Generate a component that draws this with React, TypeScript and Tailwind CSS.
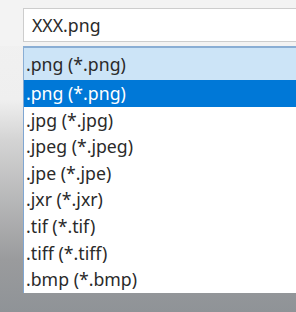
import React from "react";

const items = [
  ".png (*.png)",
  ".jpg (*.jpg)",
  ".jpeg (*.jpeg)",
  ".jpe (*.jpe)",
  ".jxr (*.jxr)",
  ".tif (*.tif)",
  ".tiff (*.tiff)",
  ".bmp (*.bmp)",
];

export default function App() {
  return (
    <div
      className="w-[296px] h-[312px] overflow-hidden flex flex-col bg-[linear-gradient(180deg,#f2f2f2_0px,#efefef_100px,#d4d4d4_140px,#9a9b9d_260px,#8f9397_312px)] text-[#2a2a2a]"
      style={{ fontFamily: '"Noto Sans", "Open Sans", sans-serif' }}
    >
      <div className="bg-[#f3f3f3] flex flex-col pl-[23px] pt-[8px] pb-[4px]">
        <div className="h-[34px] bg-white border border-r-0 border-[#cdcdcd] flex items-center pl-[8px] text-[17.7px]">
          XXX.png
        </div>
      </div>
      <div className="flex flex-col pl-[23px]">
        <div className="h-[34px] bg-[#cce4f7] border-t-2 border-l border-[#8aaed4] flex items-center pl-[2px] text-[17.7px]">
          .png (*.png)
        </div>
        <div className="bg-white border-l border-[#7fa6d2] flex flex-col">
          {items.map((t, i) => (
            <div
              key={t}
              className={
                i === 0
                  ? "h-[26.6px] bg-[#0078d7] text-white flex items-center pl-[2px] text-[17.7px]"
                  : "h-[26.6px] flex items-center pl-[2px] text-[17.7px]"
              }
            >
              {t}
            </div>
          ))}
        </div>
      </div>
    </div>
  );
}
